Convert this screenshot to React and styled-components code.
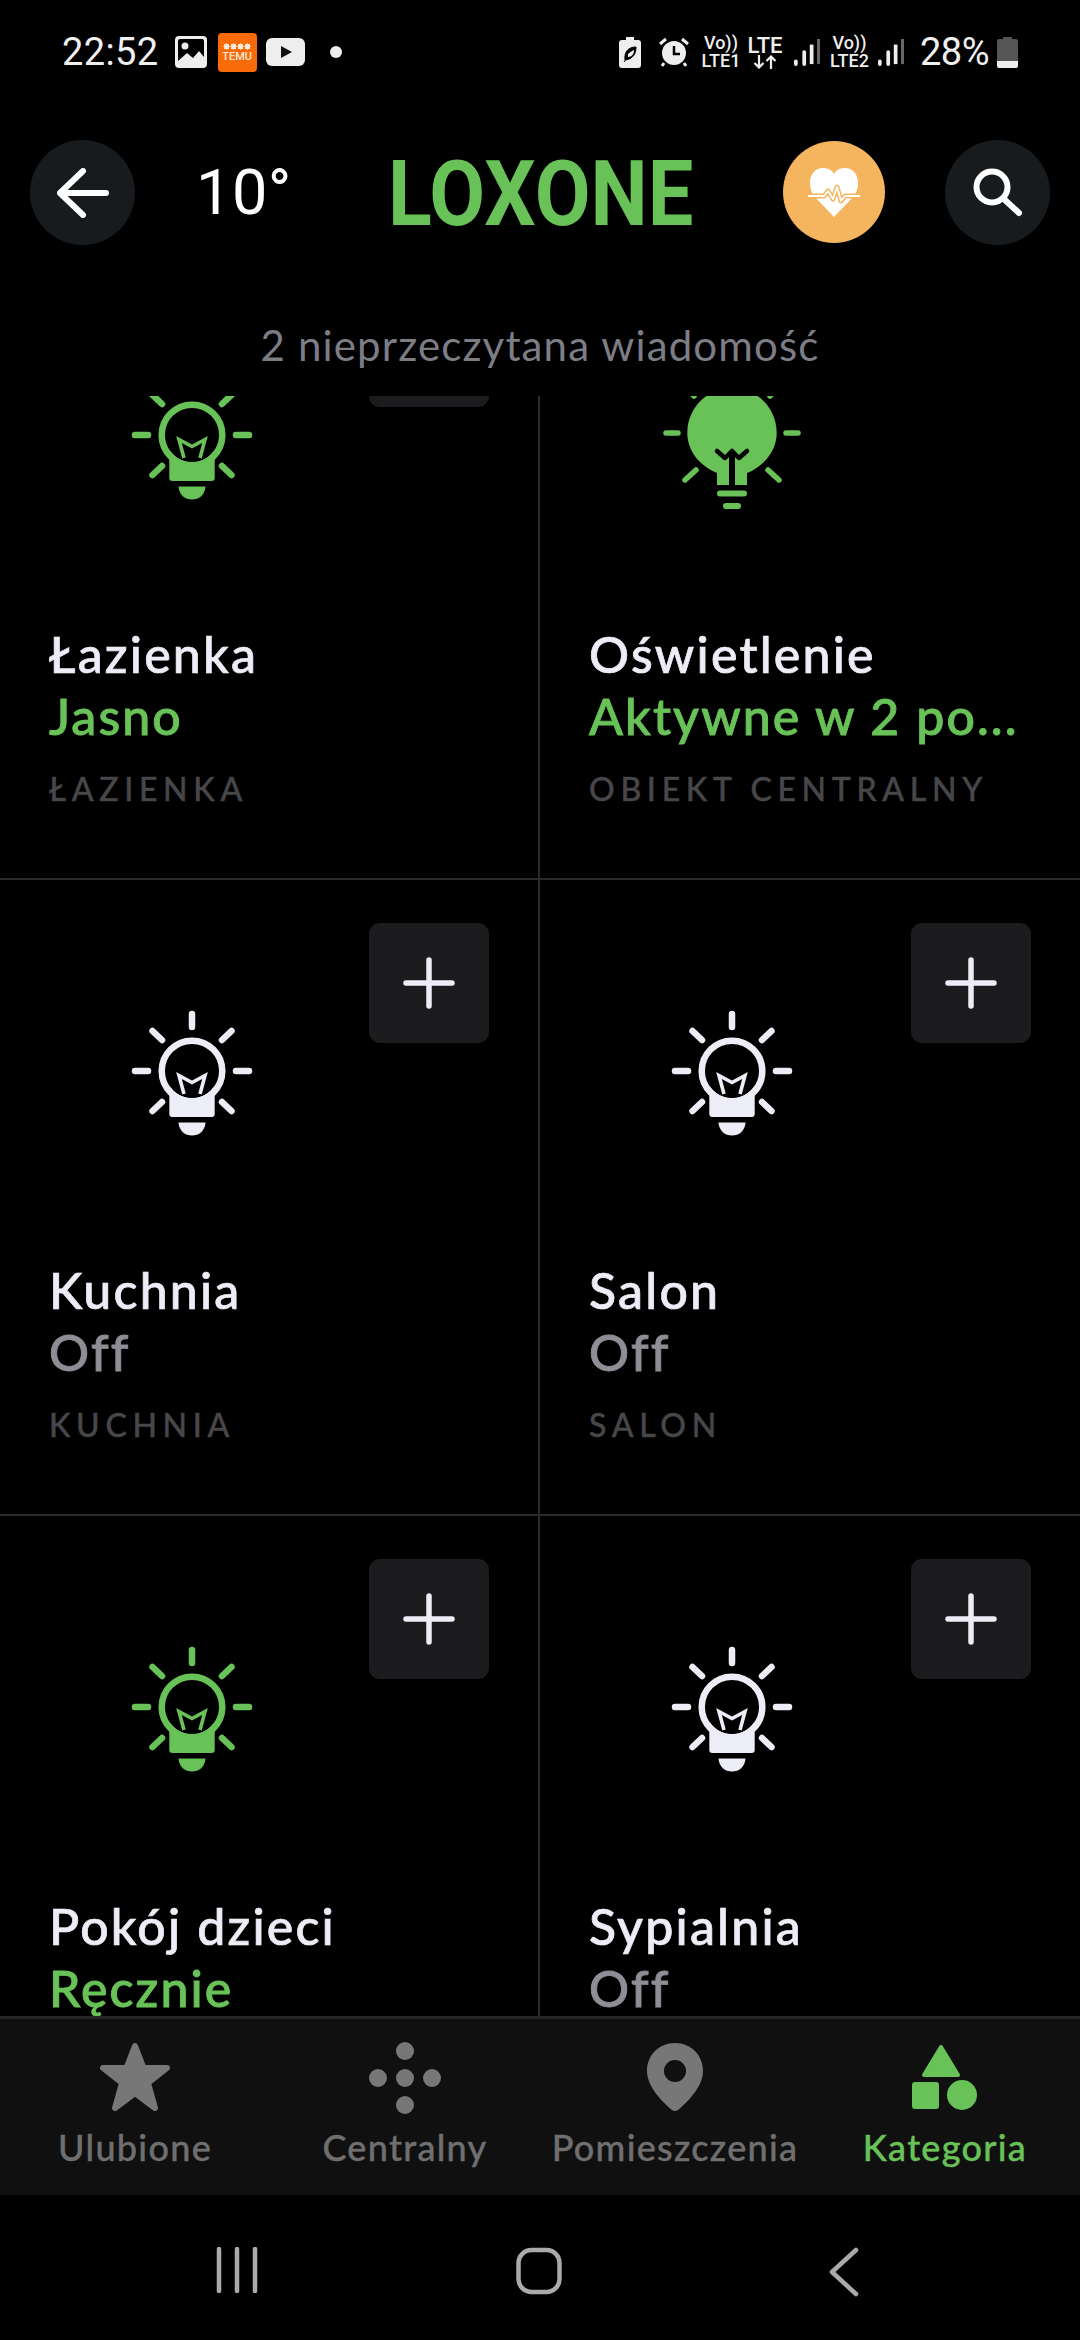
import React from 'react';
import styled, { createGlobalStyle } from 'styled-components';

const Global = createGlobalStyle`
  html, body { margin: 0; padding: 0; background: #000; }
  * { box-sizing: border-box; }
`;
const GREEN = '#68c257';
const WHITE = '#ecedf6';
const UI = '"Lato", "Noto Sans", sans-serif';
const SYS = '"Roboto", "Noto Sans", sans-serif';

const Screen = styled.div`
  width: 1080px; height: 2340px; background: #000; display: flex; flex-direction: column; overflow: hidden;
  font-family: ${UI}; color: ${WHITE};
`;
const StatusBar = styled.div`
  height: 104px; flex: none; display: flex; align-items: center; padding: 0 62px; justify-content: space-between;
`;
const StatusGroup = styled.div`display: flex; align-items: center;`;
const SysText = styled.span`
  font-family: ${SYS}; font-size: 38px; line-height: 1; color: #f0f0f0; font-weight: 400; letter-spacing: ${p => p.$ls || 0}px;
`;
const TemuIcon = styled.div`
  width: 39px; height: 39px; border-radius: 4px; background: #f96b08; color: #ffe9d6;
  display: flex; flex-direction: column; align-items: center; justify-content: center;
  font-family: ${SYS}; font-size: 11px; line-height: 11px; font-weight: 500;
`;
const TinyDots = styled.div`width: 28px; height: 7px; margin-bottom: 1px; background: radial-gradient(circle, #ffe9d6 60%, transparent 62%) 0 0 / 7px 7px repeat-x;`;
const Dot = styled.div`width: 12px; height: 12px; border-radius: 50%; background: #eee;`;
const NetStack = styled.div`
  display: flex; flex-direction: column; align-items: center; font-family: ${SYS}; color: #eee; font-weight: 500;
  font-size: 18px; line-height: 18px; width: ${p => p.$w}px; flex: none;
`;
const LteLabel = styled.span`font-size: 22px; line-height: 19px;`;
const Gap = styled.div`width: ${p => p.$w}px; flex: none;`;

const Header = styled.div`
  height: 176px; flex: none; padding: 36px 30px 0; display: flex; align-items: flex-start;
`;
const RoundButton = styled.div`
  width: ${p => p.$size || 105}px; height: ${p => p.$size || 105}px; border-radius: 50%; flex: none;
  background: ${p => p.$bg || '#181b1e'}; display: flex; align-items: center; justify-content: center;
  margin-left: ${p => p.$ml || 0}px; margin-top: ${p => p.$mt || 0}px;
`;
const Temp = styled.div`
  font-family: ${SYS}; font-size: 63px; line-height: 105px; color: #fff; margin-left: 61px; width: 90px; letter-spacing: 0.5px; flex: none;
`;
const Logo = styled.div`
  font-family: "Roboto", sans-serif; font-weight: 700; font-size: 90px; line-height: 109px; color: ${GREEN};
  margin-left: 102px; width: 302px; flex: none; white-space: nowrap; transform: scaleX(0.9); transform-origin: left center;
`;
const Notice = styled.div`
  flex: none; height: 116px; padding-top: 40px; text-align: center; font-size: 42px; line-height: 50px; color: #7c7d85; letter-spacing: 1.15px;
`;

const Scroller = styled.div`flex: none; height: 1620px; overflow: hidden;`;
const Grid = styled.div`display: grid; grid-template-columns: 540px 540px; grid-auto-rows: 636px; margin-top: -152px;`;
const Cell = styled.div`
  border-bottom: 2px solid #2b2b2b; border-right: ${p => p.$left ? '2px solid #2b2b2b' : 'none'};
  padding: 43px 49px 0; display: grid; grid-template-columns: 1fr 120px; grid-template-rows: 232px auto; min-width: 0;
`;
const IconWrap = styled.div`padding: 72px 0 0 73px;`;
const Plus = styled.div`
  width: 120px; height: 120px; border-radius: 11px; background: #1c1c1e; display: flex; align-items: center; justify-content: center;
`;
const Texts = styled.div`grid-column: 1 / -1; grid-row: 2; padding-top: 104px; white-space: nowrap;`;
const Name = styled.div`font-size: 50px; line-height: 62px; font-weight: 500; color: ${WHITE}; letter-spacing: 2.2px; -webkit-text-stroke: 0.7px currentColor;`;
const State = styled.div`font-size: 50px; line-height: 62px; font-weight: 500; color: ${p => p.$on ? GREEN : '#8d8e96'}; letter-spacing: 2.1px; -webkit-text-stroke: 0.9px currentColor;`;
const Place = styled.div`font-size: 32px; line-height: 40px; margin-top: 22px; font-weight: 500; color: #47474a; letter-spacing: 5.7px; -webkit-text-stroke: 0.4px currentColor;`;

const TabBar = styled.div`
  flex: none; height: 179px; background: #101010; border-top: 3px solid #262626; display: grid; grid-template-columns: repeat(4, 270px);
`;
const Tab = styled.div`
  display: flex; flex-direction: column; align-items: center; padding-top: 23px; color: ${p => p.$active ? GREEN : '#6f6f6f'};
`;
const TabIcon = styled.div`height: 72px; display: flex; align-items: flex-start; justify-content: center;`;
const TabLabel = styled.div`font-size: 36px; line-height: 44px; margin-top: 11px; font-weight: 500; letter-spacing: 1.3px; -webkit-text-stroke: 0.4px currentColor;`;
const SysNav = styled.div`flex: 1; display: flex; align-items: flex-start; padding-top: 52px;`;
const NavSlot = styled.div`margin-left: ${p => p.$ml}px; display: flex;`;

function Bulb({ color }) {
  return (
    <svg width="140" height="160" viewBox="-70 -76 140 160" fill="none">
      <g stroke={color} strokeWidth="6.5" strokeLinecap="round">
        <path d="M0 -57V-44M-57 0H-44M44 0H57M-39.5 -40L-30 -31M39.5 -40L30 -31M-39.5 40L-30 31M39.5 40L30 31" />
        <circle cx="0" cy="0" r="30.3" />
      </g>
      <path fill={color} d="M-22.7 14.6V43Q-22.7 46 -19.7 46H19.7Q22.7 46 22.7 43V14.6A27 27 0 0 1 -22.7 14.6Z" />
      <path fill={color} d="M-13.5 51.5H13.5C13 60 7 64.5 0 64.5C-7 64.5 -13 60 -13.5 51.5Z" />
      <path stroke={color} strokeWidth="3.6" fill="none" d="M-8 23L-13 4.5L0 11.5L13 4.5L8 23" />
    </svg>
  );
}

function BigBulb({ color }) {
  return (
    <svg width="140" height="160" viewBox="-70 -76 140 160" fill="none">
      <g transform="translate(0,-2)">
        <g stroke={color} strokeWidth="5.5" strokeLinecap="round">
          <path d="M-66 0H-54M54 0H66M-38 -37L-48 -47M38 -37L48 -47M-47 47L-36 37M47 47L36 37" />
          <path strokeWidth="6" d="M-12 60.5H12M-6 73H6" />
        </g>
        <path fill={color} d="M-15 52V40C-32 33 -44.7 18 -44.7 0C-44.7 -25 -25 -45 0 -45C25 -45 44.7 -25 44.7 0C44.7 18 32 33 15 40V52Z" />
        <path stroke="#000" strokeWidth="4.5" strokeLinecap="round" strokeLinejoin="round" fill="none" d="M-15 18L-7 25L0 18L7 25L15 18" />
        <path fill="#000" d="M-3 21H3V52H-3Z" />
      </g>
    </svg>
  );
}

const PlusIcon = () => (
  <svg width="52" height="52" viewBox="0 0 52 52"><path d="M26 3V49M3 26H49" stroke={WHITE} strokeWidth="5.5" strokeLinecap="round" /></svg>
);

function Tile({ name, state, on, place, left, plus, icon }) {
  return (
    <Cell $left={left}>
      <IconWrap>{icon}</IconWrap>
      {plus ? <Plus><PlusIcon /></Plus> : <div />}
      <Texts>
        <Name>{name}</Name>
        <State $on={on}>{state}</State>
        {place && <Place>{place}</Place>}
      </Texts>
    </Cell>
  );
}

const Signal = () => (
  <svg width="26" height="30" viewBox="0 0 28 30">
    <path d="M2 25V28M11 15V28" stroke="#eee" strokeWidth="4" strokeLinecap="round" />
    <path d="M19 7V28" stroke="#eee" strokeWidth="4" />
    <path d="M26.5 1V28" stroke="#666" strokeWidth="3.5" />
  </svg>
);

export default function App() {
  return (
    <Screen>
      <Global />
      <StatusBar>
        <StatusGroup>
          <SysText $ls={0.4}>22:52</SysText>
          <Gap $w={16} />
          <svg width="32" height="32" viewBox="0 0 32 32">
            <rect width="32" height="32" rx="4" fill="#eee" />
            <rect x="3" y="3" width="26" height="26" rx="2" fill="#000" />
            <path d="M3 30V25L12 17L18 22L24 15L29 21V30Z" fill="#eee" />
            <circle cx="10" cy="10" r="3.5" fill="#eee" />
          </svg>
          <Gap $w={11} />
          <TemuIcon><TinyDots />TEMU</TemuIcon>
          <Gap $w={9} />
          <svg width="39" height="28" viewBox="0 0 39 28">
            <rect width="39" height="28" rx="6" fill="#eee" />
            <path d="M15 8L26 14L15 20Z" fill="#111" />
          </svg>
          <Gap $w={25} />
          <Dot />
        </StatusGroup>
        <StatusGroup>
          <svg width="22" height="31" viewBox="0 0 22 31">
            <path d="M7 0H15V3H19Q22 3 22 6V28Q22 31 19 31H3Q0 31 0 28V6Q0 3 3 3H7Z" fill="#eee" />
            <path d="M6 23C5 14 10 10 17 10C17 17 14 22 6 23ZM5 25L13 14" fill="#000" stroke="#000" strokeWidth="1" />
            <path d="M9 17C11 15 13 14 15 13C15 17 13 20 9 20Z" fill="#eee" />
          </svg>
          <Gap $w={18} />
          <svg width="30" height="30" viewBox="0 0 30 30">
            <circle cx="15" cy="16" r="12" fill="#eee" />
            <path d="M15 9V17H21" stroke="#000" strokeWidth="2.5" fill="none" />
            <path d="M1 7L7 2M29 7L23 2M5 26L3 29M25 26L27 29" stroke="#eee" strokeWidth="3" />
          </svg>
          <Gap $w={13} />
          <NetStack $w={38}><span>Vo))</span><span>LTE1</span></NetStack>
          <Gap $w={9} />
          <NetStack $w={32}>
            <LteLabel>LTE</LteLabel>
            <svg width="24" height="14" viewBox="0 0 24 14" fill="none">
              <path d="M6 0V12M1.5 8L6 12.5L10.5 8M18 14V2M13.5 6L18 1.5L22.5 6" stroke="#eee" strokeWidth="2.2" />
            </svg>
          </NetStack>
          <Gap $w={13} />
          <Signal />
          <Gap $w={10} />
          <NetStack $w={39}><span>Vo))</span><span>LTE2</span></NetStack>
          <Gap $w={9} />
          <Signal />
          <Gap $w={16} />
          <SysText $ls={-0.5}>28%</SysText>
          <Gap $w={8} />
          <svg width="21" height="31" viewBox="0 0 21 31">
            <path d="M6 0H15V2H19Q21 2 21 4V24H0V4Q0 2 2 2H6Z" fill="#555" />
            <path d="M0 24H21V29Q21 31 19 31H2Q0 31 0 29Z" fill="#eee" />
          </svg>
        </StatusGroup>
      </StatusBar>
      <Header>
        <RoundButton>
          <svg width="52" height="50" viewBox="0 0 52 50" fill="none">
            <path d="M3 25H49M26 3L3 25L26 47" stroke="#fff" strokeWidth="6" strokeLinecap="round" strokeLinejoin="round" />
          </svg>
        </RoundButton>
        <Temp>10°</Temp>
        <Logo>LOXONE</Logo>
        <RoundButton $bg="#f5b55f" $size={102} $ml={93} $mt={1}>
          <svg width="52" height="52" viewBox="0 0 52 52">
            <path fill="#fff" d="M26 51L7 31C3 27 2 21 2 16C2 8 8 2 15 2C20 2 24 4 26 8C28 4 32 2 37 2C44 2 50 8 50 16C50 21 49 27 45 31Z" />
            <path d="M0 30H16L20 25L25 33L29 21L33 35L37 30H52" stroke="#f5b55f" strokeWidth="5" fill="none" strokeLinejoin="round" />
            <path d="M0 30H16L20 25L25 33L29 21L33 35L37 30H52" stroke="#fff" strokeWidth="2" fill="none" strokeLinejoin="round" />
          </svg>
        </RoundButton>
        <RoundButton $ml={60}>
          <svg width="50" height="50" viewBox="0 0 50 50" fill="none">
            <circle cx="19" cy="19" r="15.5" stroke="#fff" strokeWidth="6" />
            <path d="M32 32L46 45" stroke="#fff" strokeWidth="6" strokeLinecap="round" />
          </svg>
        </RoundButton>
      </Header>
      <Notice>2 nieprzeczytana wiadomość</Notice>
      <Scroller>
        <Grid>
          <Tile left plus name="Łazienka" state="Jasno" on place="ŁAZIENKA" icon={<Bulb color={GREEN} />} />
          <Tile name="Oświetlenie" state="Aktywne w 2 po..." on place="OBIEKT CENTRALNY" icon={<BigBulb color={GREEN} />} />
          <Tile left plus name="Kuchnia" state="Off" place="KUCHNIA" icon={<Bulb color={WHITE} />} />
          <Tile plus name="Salon" state="Off" place="SALON" icon={<Bulb color={WHITE} />} />
          <Tile left plus name="Pokój dzieci" state="Ręcznie" on icon={<Bulb color={GREEN} />} />
          <Tile plus name="Sypialnia" state="Off" icon={<Bulb color={WHITE} />} />
        </Grid>
      </Scroller>
      <TabBar>
        <Tab>
          <TabIcon>
            <svg width="72" height="70" viewBox="0 0 72 70" fill="#777">
              <path stroke="#777" strokeWidth="6" strokeLinejoin="round" d="M36 4L44.5 26H68L49 41L56 66L36 51L16 66L23 41L4 26H27.5Z" />
            </svg>
          </TabIcon>
          <TabLabel>Ulubione</TabLabel>
        </Tab>
        <Tab>
          <TabIcon>
            <svg width="72" height="72" viewBox="0 0 72 72" fill="#777">
              <circle cx="36" cy="9" r="9" /><circle cx="36" cy="36" r="9" /><circle cx="36" cy="63" r="9" />
              <circle cx="9" cy="36" r="9" /><circle cx="63" cy="36" r="9" />
            </svg>
          </TabIcon>
          <TabLabel>Centralny</TabLabel>
        </Tab>
        <Tab>
          <TabIcon>
            <svg width="58" height="70" viewBox="0 0 58 70">
              <path fill="#777" fillRule="evenodd" d="M29 1C13 1 1 13 1 29C1 43 13 57 26 68Q29 70 32 68C45 57 57 43 57 29C57 13 45 1 29 1ZM29 18A11 11 0 1 1 29 40A11 11 0 1 1 29 18Z" />
            </svg>
          </TabIcon>
          <TabLabel>Pomieszczenia</TabLabel>
        </Tab>
        <Tab $active>
          <TabIcon>
            <svg width="66" height="70" viewBox="0 0 66 70" fill={GREEN}>
              <path stroke={GREEN} strokeWidth="4" strokeLinejoin="round" d="M29 5L46 33H12Z" />
              <rect x="0" y="40" width="27" height="27" rx="3" />
              <circle cx="50" cy="53" r="15" />
            </svg>
          </TabIcon>
          <TabLabel>Kategoria</TabLabel>
        </Tab>
      </TabBar>
      <SysNav>
        <NavSlot $ml={216}>
          <svg width="42" height="46" viewBox="0 0 42 46"><path d="M3 2V44M21 2V44M39 2V44" stroke="#aaa" strokeWidth="4.5" strokeLinecap="round" /></svg>
        </NavSlot>
        <NavSlot $ml={258}>
          <svg width="46" height="48" viewBox="0 0 46 48"><rect x="2.5" y="3" width="41" height="42" rx="13" fill="none" stroke="#aaa" strokeWidth="4.5" /></svg>
        </NavSlot>
        <NavSlot $ml={267}>
          <svg width="30" height="50" viewBox="0 0 30 50"><path d="M27 3L3 25L27 47" fill="none" stroke="#aaa" strokeWidth="4.5" strokeLinecap="round" strokeLinejoin="round" /></svg>
        </NavSlot>
      </SysNav>
    </Screen>
  );
}
